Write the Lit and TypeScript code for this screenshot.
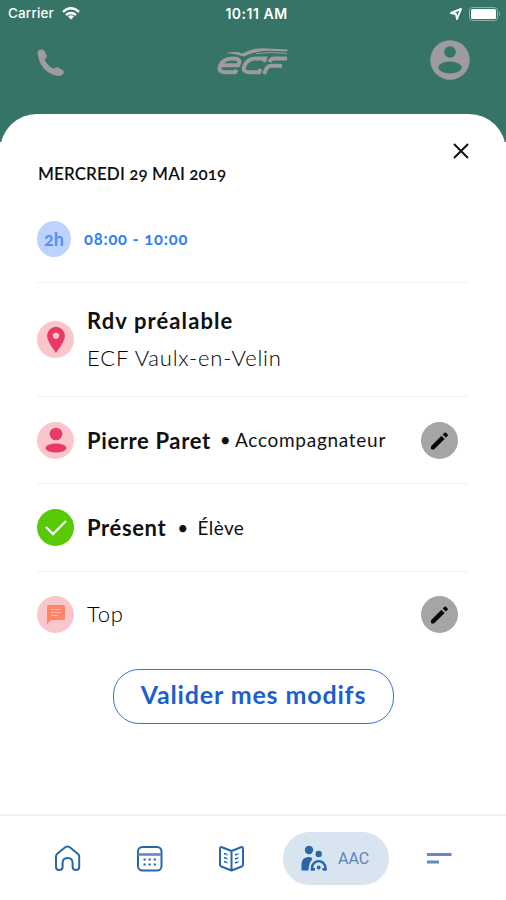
import { LitElement, html, css, svg } from "lit";
import { customElement } from "lit/decorators.js";

@customElement("app-root")
export class AppRoot extends LitElement {
  static styles = css`
    :host { display: block; width: 506px; height: 900px; overflow: hidden; background: #fff; font-family: Lato, "Open Sans", sans-serif; color: #111; }
    * { box-sizing: border-box; }
    svg { display: block; flex: none; }
    .screen { display: flex; flex-direction: column; height: 900px; }
    .header { background: #357466; height: 142px; flex: none; }
    .status { height: 27px; display: grid; grid-template-columns: 1fr auto 1fr; align-items: center; padding: 0 5px 0 8px; color: #fff; font: 500 13.5px/27px Inter, sans-serif; }
    .carrier { display: flex; align-items: center; gap: 8px; letter-spacing: 0.15px; }
    .clock { font-weight: 600; font-size: 14px; letter-spacing: 0.5px; padding-left: 4px; }
    .right { display: flex; justify-content: flex-end; align-items: center; gap: 7px; }
    .bar { display: grid; grid-template-columns: 1fr auto 1fr; align-items: center; height: 66px; padding: 0 36px; }
    .bar > :last-child { justify-self: end; }
    .phone { margin: 5px 0 0 1px; }
    .logo { margin-top: 4px; }
    .sheet { background: #fff; border-radius: 37px 37px 0 0; margin-top: -28px; flex: 1; display: flex; flex-direction: column; padding: 0 37px; }
    .top { height: 46px; display: flex; justify-content: flex-end; align-items: flex-end; margin-right: -1px; }
    .date { height: 28px; line-height: 28px; font-size: 17px; font-weight: 600; padding-left: 1px; letter-spacing: 0.1px; font-variant-numeric: oldstyle-nums; }
    .row { display: flex; align-items: center; border-bottom: 1px solid #f1f1f1; gap: 13px; white-space: nowrap; }
    .time { height: 95px; padding-top: 8px; }
    .place { height: 114px; }
    .person { height: 87px; }
    .pupil { height: 88px; }
    .note { height: 85px; border: 0; }
    .disc { width: 37px; height: 37px; border-radius: 50%; flex: none; background: #f9c6cc; display: grid; place-items: center; }
    .hours { width: 34px; height: 36px; background: #bdd3fd; color: #5590f7; font-size: 18px; font-weight: 700; font-variant-numeric: oldstyle-nums; }
    .range { color: #2f7df6; font-size: 16.5px; font-weight: 700; letter-spacing: 0.78px; font-variant-numeric: oldstyle-nums; }
    .ok { background: #57c906; }
    .edit { background: #a5a5a5; margin-left: auto; margin-right: 11px; }
    .lines { display: flex; flex-direction: column; }
    .lines span { line-height: 38px; }
    .strong { font-size: 22px; font-weight: 700; letter-spacing: 0.62px; }
    .lines .strong { letter-spacing: 1.1px; padding-top: 1px; margin-bottom: -1px; }
    .light { font-size: 22px; font-weight: 300; letter-spacing: 0.8px; padding-bottom: 1px; color: #000; }
    .note .light { padding-bottom: 2px; }
    .role { font-size: 19px; font-weight: 400; letter-spacing: 0.2px; padding-bottom: 1px; }
    .guide { letter-spacing: 0.72px; margin-left: -9px; }
    .dot { margin-left: -2px; }
    .first { margin-left: -4px; }
    .name { margin-left: -4px; letter-spacing: 0.4px; }
    .button { width: 281px; height: 55px; border: 1px solid #3c72d6; border-radius: 26px; margin: 12px 0 0 76px; background: none; padding: 0 0 5px; color: #1b5fd0; font: 700 25px Lato, sans-serif; letter-spacing: 0.85px; white-space: nowrap; }
    .nav { height: 86px; flex: none; border-top: 2px solid #efefef; display: flex; align-items: center; padding: 0 54px; gap: 55px; }
    .pill { width: 106px; height: 53px; flex: none; border-radius: 27px; background: #d8e5f0; display: flex; align-items: center; gap: 11px; padding-left: 17px; margin: 0 -18px 0 -17px; color: #5a86bb; font: 400 16px Roboto, sans-serif; }
  `;

  pencil() {
    return svg`<svg width="21" height="21" viewBox="0 0 21 21"><path d="M2 19Q1.500 17 2.500 15.800L12.400 5.800l3.200 3.200L5.500 19Q4.500 20 2 19ZM13.700 4.500l1.700-1.700q.8-.8 1.600 0l1.500 1.500q.8.800 0 1.600L16.800 7.600Z" fill="#080808"/></svg>`;
  }

  render() {
    return html`<div class="screen">
      <header class="header">
        <div class="status">
          <span class="carrier"><span>Carrier</span>
            <svg width="18" height="13" viewBox="0 0 18 13" fill="none" stroke="#fff" stroke-width="2.4"><path d="M1 4.800Q9-2.200 17 4.800M4 8Q9 3.800 14 8"/><path d="M6 9.500Q9 7.200 12 9.500L9 12.600Z" fill="#fff" stroke="none"/></svg>
          </span>
          <span class="clock">10:11 AM</span>
          <span class="right">
            <svg width="12" height="12" viewBox="0 0 12 12"><path d="M11 1 7 11 6 6 1 5Z" fill="none" stroke="#fff" stroke-width="1.900" stroke-linejoin="round"/></svg>
            <svg width="32" height="14" viewBox="0 0 32 14"><rect x=".5" y=".5" width="28" height="13" rx="3" fill="none" stroke="#8db0a7"/><rect x="2" y="2" width="25" height="10" rx="1.500" fill="#fff"/><path d="M30 4.500q2.200 2.500 0 5Z" fill="#8db0a7"/></svg>
          </span>
        </div>
        <div class="bar">
          <svg class="phone" width="28" height="28" viewBox="0 0 28 28"><path d="M.5 3.500C.5 1 3 .3 5 .5Q7 .8 8 3l1.700 3.500Q10.300 8 9 9.200L7.700 10.500Q10 16.500 16.500 19.700L18.300 18.600q1.500-.8 3 0L26 21.200q1.600 1.200.7 2.900Q25 27.500 20.500 27 2.500 23 .5 3.500Z" fill="#9d9b9e"/></svg>
          <svg class="logo" width="74" height="30" viewBox="0 0 74 30">
            <g fill="none" stroke="#9d9b9e" stroke-width="4"><path d="M5.500 18.300H22Q26.500 11.600 17 11.600 7.500 11.600 4.500 18 1 25.200 10 25.200H19L21 23"/><path d="M48 15 49 11.600H40Q32 11.600 28.500 18.500 25.500 25.200 34 25.200H43L44.500 22"/><path d="M48 27 50.500 21.500Q52 18.800 55 18.800H66M53.500 15Q55 11.600 58 11.600H71"/></g>
            <path d="M10 6Q20 4 26 6.500 38 0 52 1.500L72 2.500 71 4.500 58 4Q40 3 28 9.500 20 6.500 10 6Z" fill="#9d9b9e"/><path d="M40 6.500Q56 4.500 71 6.500" fill="none" stroke="#9d9b9e" stroke-width="1"/></svg>
          <svg width="40" height="40" viewBox="0 0 40 40"><circle cx="20" cy="20" r="19.700" fill="#9d9b9e"/><circle cx="20" cy="12" r="5.800" fill="#357466"/><ellipse cx="20" cy="27.500" rx="11.600" ry="6" fill="#357466"/></svg>
        </div>
      </header>
      <main class="sheet">
        <div class="top"><svg width="18" height="18" viewBox="0 0 18 18"><path d="m2 2 14 14M16 2 2 16" stroke="#111" stroke-width="2"/></svg></div>
        <div class="date">MERCREDI 29 MAI 2019</div>
        <div class="row time"><span class="disc hours">2h</span><span class="range">08:00 - 10:00</span></div>
        <div class="row place"><span class="disc"><svg width="20" height="28" viewBox="0 0 20 28"><path d="M10 27Q1 15 1 9.800a9 9 0 0 1 18 0Q19 15 10 27ZM10 6.500a3.200 3.200 0 1 0 .01 0Z" fill="#e93a67" fill-rule="evenodd"/></svg></span>
          <span class="lines"><span class="strong">Rdv préalable</span><span class="light">ECF Vaulx-en-Velin</span></span></div>
        <div class="row person"><span class="disc"><svg width="24" height="28" viewBox="0 0 24 28"><circle cx="12" cy="8" r="6.300" fill="#e93a67"/><ellipse cx="12" cy="22" rx="10.500" ry="4.600" fill="#e93a67"/></svg></span>
          <span class="strong">Pierre Paret</span><span class="role first">•</span><span class="role guide">Accompagnateur</span><span class="disc edit">${this.pencil()}</span></div>
        <div class="row pupil"><span class="disc ok"><svg width="24" height="18" viewBox="0 0 24 18"><path d="m2 8 7 7L22 2" fill="none" stroke="#fff" stroke-width="2.300"/></svg></span>
          <span class="strong">Présent</span><span class="role dot">•</span><span class="role name">Élève</span></div>
        <div class="row note"><span class="disc"><svg width="20" height="20" viewBox="0 0 20 20"><path d="M1 1.500Q1 0 2.500 0h15Q19 0 19 1.500v12Q19 15 17.500 15H5l-4 4Z" fill="#ff8468"/><path d="M5 4.500h10M5 7.500h10M5 10.500h7" stroke="#f9b4ae" stroke-width="1.200"/></svg></span>
          <span class="light">Top</span><span class="disc edit">${this.pencil()}</span></div>
        <button class="button">Valider mes modifs</button>
      </main>
      <nav class="nav">
        <svg width="27" height="27" viewBox="0 0 27 27"><path d="M2 11.500Q2 10 3 9L11.500 2Q13.500.8 15.500 2L24 9Q25.200 10 25.200 11.500V22Q25.200 25 22 25T18.600 22V18Q18.600 13 13.600 13T8.600 18V22Q8.600 25 5.300 25T2 22Z" fill="none" stroke="#2766a9" stroke-width="2"/></svg>
        <svg width="27" height="27" viewBox="0 0 27 27"><rect x="2" y="2" width="23.500" height="23.500" rx="4.500" fill="none" stroke="#2766a9" stroke-width="2"/><path d="M2 9.500H25" stroke="#6389c0" stroke-width="2.600"/><path d="M7.500 14.500H20M7.500 19.500H20" stroke="#2766a9" stroke-width="2.200" stroke-dasharray="2.200 2.900"/></svg>
        <svg width="27" height="27" viewBox="0 0 27 27"><path d="M13.500 6 4 2.200Q2 1.600 2 3.500V19.500Q2 21 3.300 21.500L13.500 25.500 23.700 21.500Q25 21 25 19.500V3.500Q25 1.600 23 2.200ZM13.500 6V25" fill="none" stroke="#2766a9" stroke-width="2" stroke-linejoin="round"/><path d="M6 8.500 10 10M6 12.500 10 14M6 16.500 10 18M17 10 21 8.500M17 14 21 12.500M17 18 21 16.500" stroke="#2766a9" stroke-width="1.700" stroke-dasharray="3 .8"/></svg>
        <div class="pill"><svg width="27" height="27" viewBox="0 0 27 27" fill="#2766a9"><circle cx="9" cy="5" r="4.200"/><circle cx="18.700" cy="9" r="3.200"/><path d="M1.500 25.500V19Q2 12 9 12 12.300 12 12.300 14.500 9 17 8.500 25.500Z"/><path d="M12 25.500V22.800a6.700 6.700 0 0 1 13.400 0V25.500" fill="none" stroke="#2766a9" stroke-width="2.400"/><circle cx="18.700" cy="22.500" r="1.900"/><path d="M11 24.300H15M22.400 24.300H26.500" stroke="#2766a9" stroke-width="2.600"/></svg>AAC</div>
        <svg width="26" height="27" viewBox="0 0 26 27"><path d="M1 9.500H25.500M1 17H13" stroke="#6389c0" stroke-width="3"/></svg>
      </nav>
    </div>`;
  }
}
